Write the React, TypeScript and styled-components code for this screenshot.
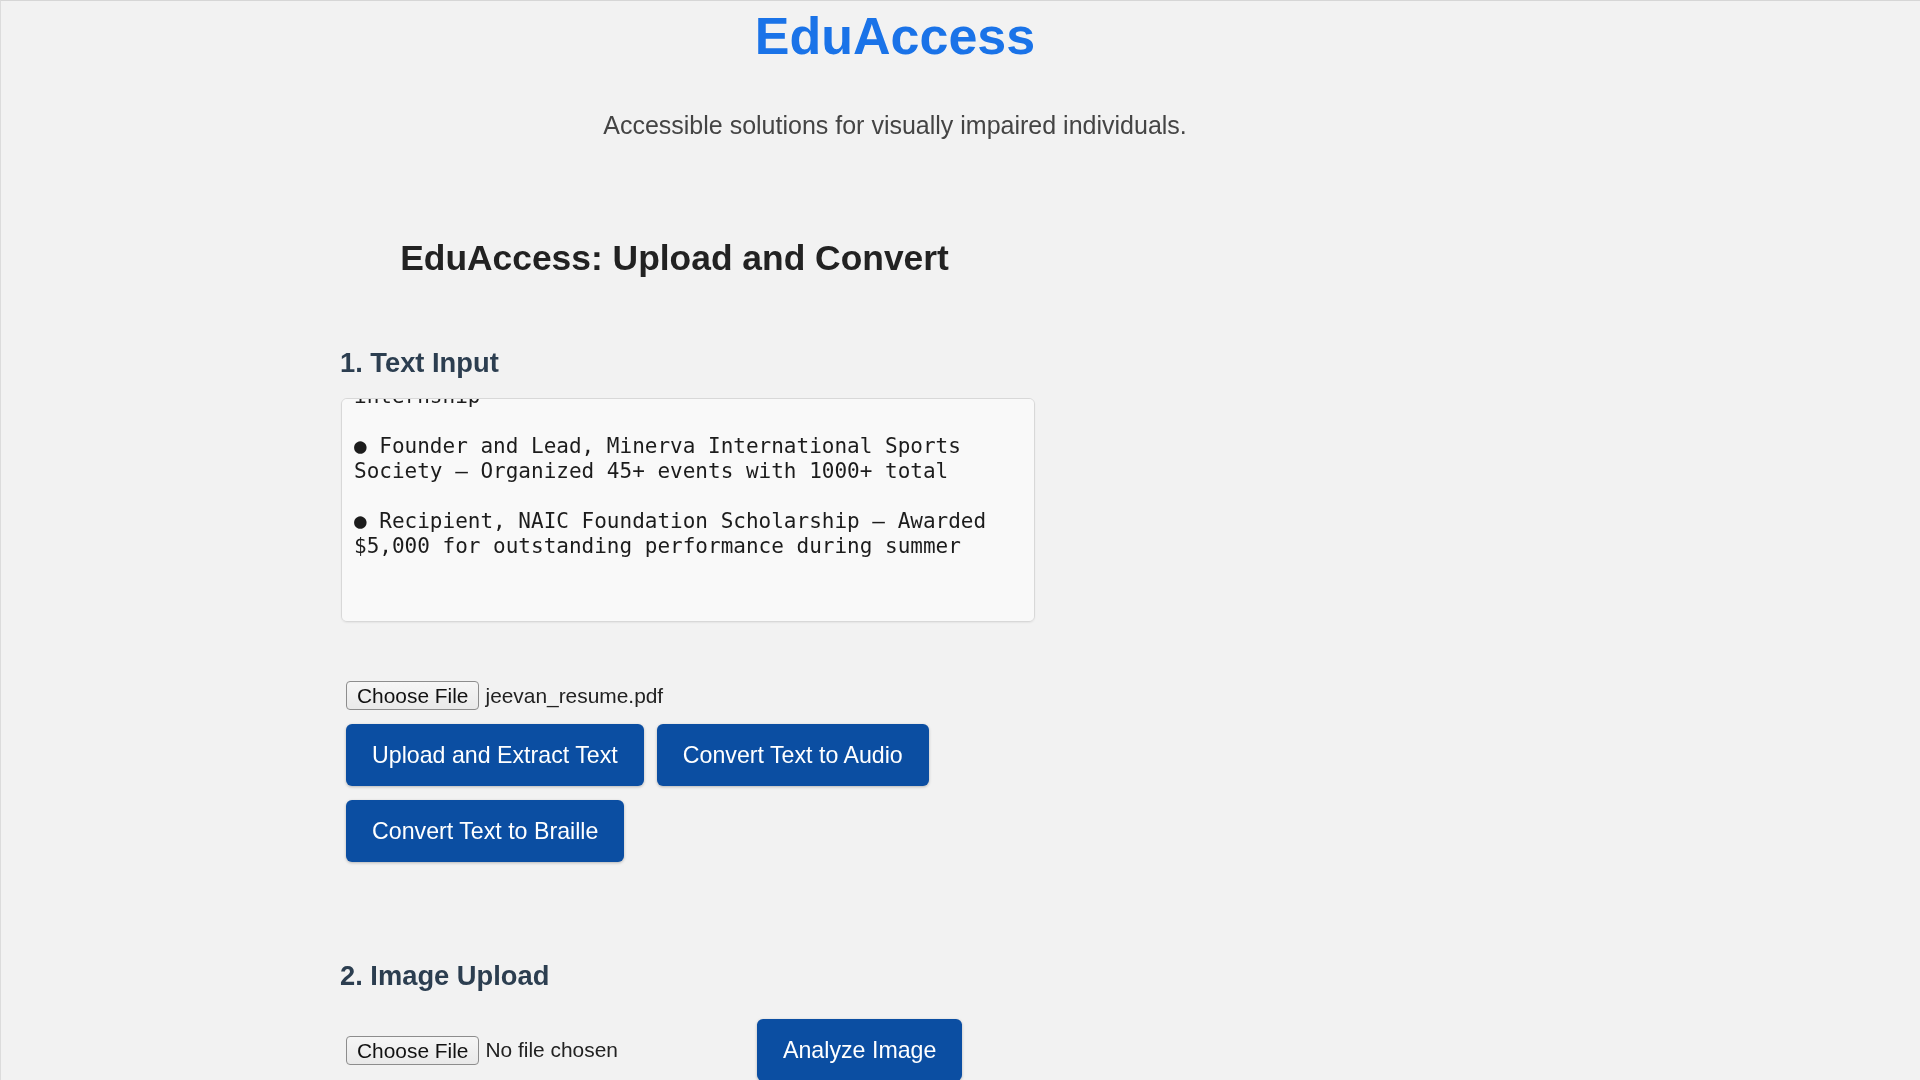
import React, { useLayoutEffect, useRef } from "react";
import styled, { createGlobalStyle } from "styled-components";

const GlobalStyle = createGlobalStyle`
    html, body {
        margin: 0;
        padding: 0;
        background: #f2f2f2;
    }
    body {
        font-family: "Liberation Sans", Arial, sans-serif;
        color: #222;
    }
`;

const resumeText = [
    "● Software Development Intern, Acme Labs — Built",
    "internal tools used by 200+ employees during summer",
    "internship",
    "",
    "● Founder and Lead, Minerva International Sports",
    "Society — Organized 45+ events with 1000+ total",
    "",
    "● Recipient, NAIC Foundation Scholarship — Awarded",
    "$5,000 for outstanding performance during summer",
    "",
    "",
].join("\n");

interface FilePickerProps {
    fileName?: string;
    $fixed?: boolean;
}

const FilePicker = ({ fileName, $fixed }: FilePickerProps) => (
    <Picker $fixed={$fixed}>
        <ChooseButton type="button">Choose File</ChooseButton>
        <FileName>{fileName ?? "No file chosen"}</FileName>
    </Picker>
);

const App = () => {
    const textRef = useRef<HTMLTextAreaElement>(null);

    // the reference shows the box scrolled to its end
    useLayoutEffect(() => {
        if (textRef.current) {
            textRef.current.scrollTop = textRef.current.scrollHeight;
        }
    }, []);

    return (
        <Page>
            <GlobalStyle />
            <Header>
                <Title>EduAccess</Title>
                <Tagline>Accessible solutions for visually impaired individuals.</Tagline>
            </Header>

            <Main>
                <PanelTitle>EduAccess: Upload and Convert</PanelTitle>

                <SectionTitle $top={68}>1. Text Input</SectionTitle>
                <TextBox ref={textRef} defaultValue={resumeText} spellCheck={false} />

                <FileRow>
                    <FilePicker fileName="jeevan_resume.pdf" />
                </FileRow>

                <Actions>
                    <ActionButton>Upload and Extract Text</ActionButton>
                    <ActionButton>Convert Text to Audio</ActionButton>
                    <ActionButton>Convert Text to Braille</ActionButton>
                </Actions>

                <SectionTitle $top={98}>2. Image Upload</SectionTitle>
                <ImageRow>
                    <FilePicker $fixed />
                    <ActionButton>Analyze Image</ActionButton>
                </ImageRow>
            </Main>
        </Page>
    );
};
export default App;

const Page = styled.div`
    min-height: 100vh;
    box-sizing: border-box;
    border-top: 1px solid #d6d6d6;
    border-left: 1px solid #dcdcdc;
    background: #f2f2f2;
    overflow: hidden;
`;

const Header = styled.header`
    width: 1788px;
    padding-top: 5px;
    text-align: center;
`;

const Title = styled.h1`
    margin: 0;
    font-size: 52px;
    line-height: 60px;
    font-weight: 700;
    color: #1a73e8;
`;

const Tagline = styled.p`
    margin: 45px 0 0;
    font-size: 25px;
    line-height: 29px;
    color: #444;
`;

const Main = styled.main`
    padding-left: 339px;
    padding-bottom: 40px;
`;

const PanelTitle = styled.h2`
    width: 669px;
    margin: 98px 0 0;
    text-align: center;
    font-size: 35.4px;
    line-height: 41px;
    font-weight: 700;
    color: #222;
`;

const SectionTitle = styled.h3<{ $top: number }>`
    margin: ${props => props.$top}px 0 0;
    font-size: 27.3px;
    line-height: 31px;
    font-weight: 700;
    color: #2c3e50;
`;

const TextBox = styled.textarea`
    display: block;
    box-sizing: border-box;
    width: 694px;
    height: 224px;
    margin: 20px 0 0 1px;
    padding: 12px;
    border: 1px solid #d8d8d8;
    border-radius: 6px;
    background: #f9f9f9;
    box-shadow: 0 1px 2px rgba(0, 0, 0, 0.06);
    font-family: "DejaVu Sans Mono", "Liberation Mono", monospace;
    font-size: 21px;
    line-height: 25px;
    color: #1c1c1c;
    resize: none;
    outline: none;
    scrollbar-width: none;
    &::-webkit-scrollbar {
        display: none;
    }
`;

const FileRow = styled.div`
    display: flex;
    align-items: center;
    margin: 59px 0 0 6px;
`;

const Picker = styled.div<{ $fixed?: boolean }>`
    display: flex;
    align-items: center;
    gap: 6px;
    ${props => props.$fixed && `width: 397px; flex-shrink: 0;`}
`;

const ChooseButton = styled.button`
    box-sizing: border-box;
    height: 29px;
    padding: 0 10px;
    border: 1px solid #8d8d8d;
    border-radius: 4px;
    background: linear-gradient(#f6f6f6, #e9e9e9);
    font-family: "Liberation Sans", Arial, sans-serif;
    font-size: 20.9px;
    line-height: 27px;
    color: #111;
    cursor: pointer;
`;

const FileName = styled.span`
    font-size: 20.9px;
    color: #222;
`;

const Actions = styled.div`
    display: flex;
    flex-wrap: wrap;
    gap: 14px 13px;
    width: 600px;
    margin: 14px 0 0 6px;
`;

const ActionButton = styled.button`
    box-sizing: border-box;
    height: 62px;
    padding: 0 26px;
    border: none;
    border-radius: 6px;
    background: #0b4ea2;
    box-shadow: 0 1px 3px rgba(0, 0, 0, 0.25);
    font-family: "Liberation Sans", Arial, sans-serif;
    font-size: 23.2px;
    color: #fff;
    cursor: pointer;
    &:hover {
        background: #083f85;
    }
`;

const ImageRow = styled.div`
    display: flex;
    align-items: center;
    gap: 14px;
    margin: 28px 0 0 6px;
`;
